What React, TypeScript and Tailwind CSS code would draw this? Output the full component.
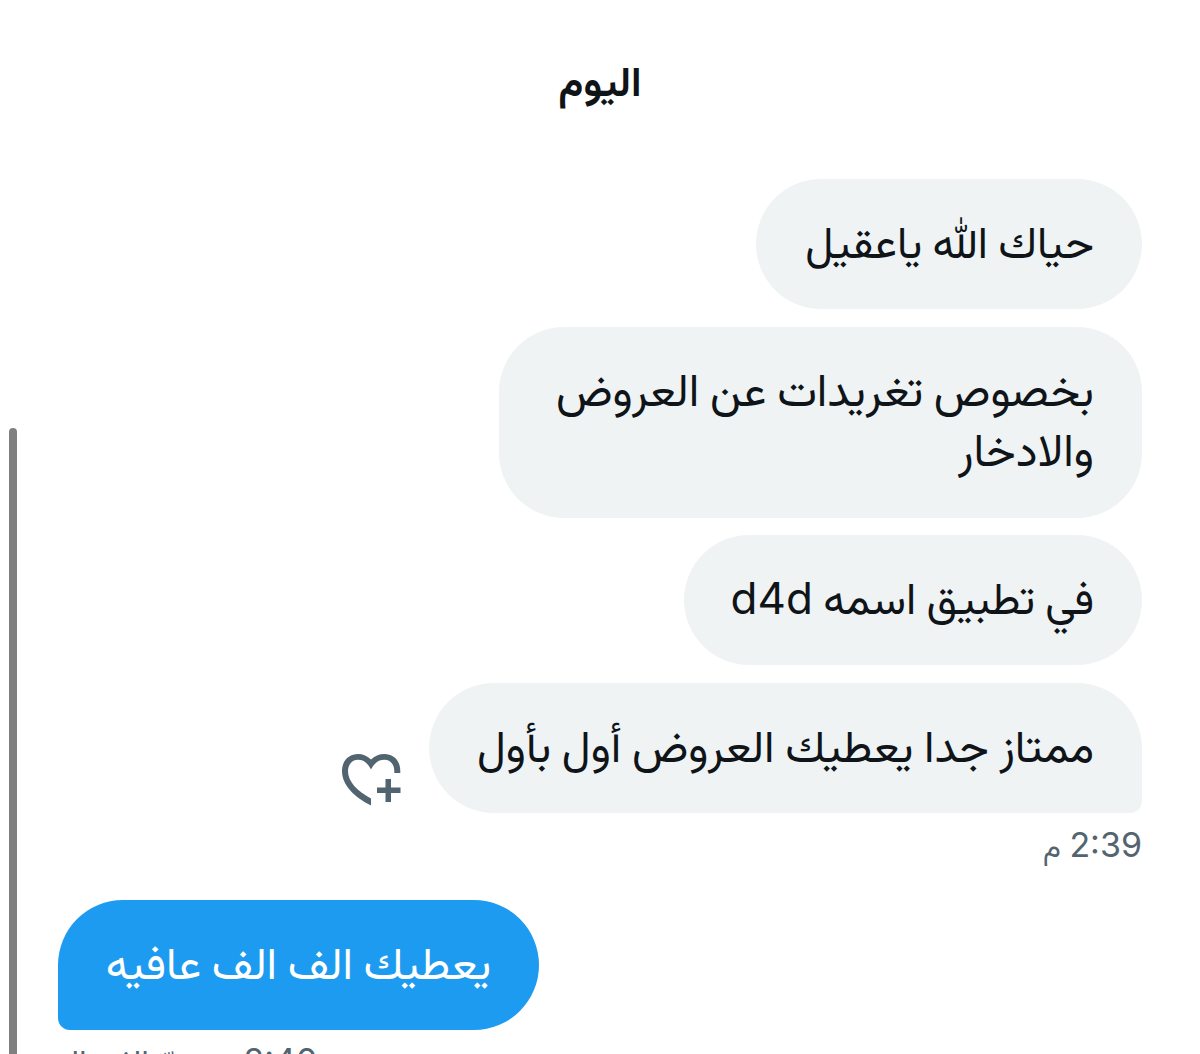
import React from 'react';
import clsx from 'clsx';

interface Message {
  id: number;
  lines: React.ReactNode[];
  size: string;
  isLast?: boolean;
}

const received: Message[] = [
  { id: 1, lines: ['حياك الله ياعقيل'], size: 'w-[386px] text-[44px]' },
  { id: 2, lines: ['بخصوص تغريدات عن العروض', 'والادخار'], size: 'w-[643px] text-[45.4px]' },
  { id: 3, lines: [<>في تطبيق اسمه <span className="text-[44px]">d4d</span></>], size: 'w-[458px] text-[44px]' },
  { id: 4, lines: ['ممتاز جدا يعطيك العروض أول بأول'], size: 'w-[713px] text-[45.2px]', isLast: true },
];

const HeartPlusIcon: React.FC<{ className?: string }> = ({ className }) => (
  <svg viewBox="0 0 60 52" fill="currentColor" className={className}>
    <path d="M29 5.500C25.500 2 21 0 16 0C7 0 0 6.500 0 17C0 31 12 43 29 51.500V44.500C15 37 6 27.500 6 17C6 10 10.500 5.800 16 5.800C22 5.800 26 9.500 29 15.500C32 9.500 36 5.800 42.500 5.800C48 5.800 52.300 10 52.300 17V19H58.300V17C58.300 6.500 51.500 0 42.500 0C37 0 32.500 2 29 5.500Z" />
    <path d="M43.500 25H49V33.500H58.500V39H49V48H43.500V39H35V33.500H43.500Z" />
  </svg>
);

const Bubble: React.FC<{ message: Message; isOwn?: boolean }> = ({ message, isOwn = false }) => (
  <div
    className={clsx(
      'rounded-[65px] px-12 pt-[33px] pb-9 leading-[60px] [word-spacing:-2px] whitespace-nowrap',
      isOwn ? 'bg-[#1d9bf0] text-white' : 'bg-[#eff3f4] text-[#0f1419]',
      message.size,
      message.isLast && (isOwn ? 'rounded-bl-[12px]' : 'rounded-br-[12px]')
    )}
  >
    {message.lines.map((line, i) => (
      <p key={i} className="h-[61px] nth-2:-mt-px nth-2:mb-px">{line}</p>
    ))}
  </div>
);

export default function App() {
  return (
    <div
      dir="rtl"
      className="relative h-[1054px] w-[1200px] overflow-hidden bg-white px-[58px] font-['Inter','Vazirmatn','Noto_Sans_Arabic','Noto_Sans',sans-serif]"
    >
      <div className="absolute top-[428px] left-[9px] h-[640px] w-2 rounded-full bg-[#808080]" />

      <h2 className="h-[114px] pt-[52px] text-center text-[40.5px] leading-[60px] font-bold text-[#0f1419]">اليوم</h2>

      <div className="mt-[65px] flex flex-col items-start gap-[17.7px]">
        {received.map(message => (
          <div key={message.id} className="flex items-end gap-[27px]">
            <Bubble message={message} />
            {message.isLast && (
              <button className="mb-[7px] text-[#536471]">
                <HeartPlusIcon className="h-[52px] w-[60px]" />
              </button>
            )}
          </div>
        ))}
      </div>
      <p className="mt-2 text-[34px] leading-[48px] [word-spacing:-1px] text-[#536471]">
        2:39 <span className="text-[30px]">م</span>
      </p>

      <div className="mt-[30px] flex flex-col items-end">
        <Bubble message={{ id: 5, lines: ['يعطيك الف الف عافيه'], size: 'w-[481px] text-[45px]', isLast: true }} isOwn />
        <p className="mt-[7px] text-[34px] leading-[48px] whitespace-nowrap text-[#536471]">
          2:40 <span className="text-[33px] [word-spacing:-1px]">م · تمّ الإرسال</span>
        </p>
      </div>
    </div>
  );
}
